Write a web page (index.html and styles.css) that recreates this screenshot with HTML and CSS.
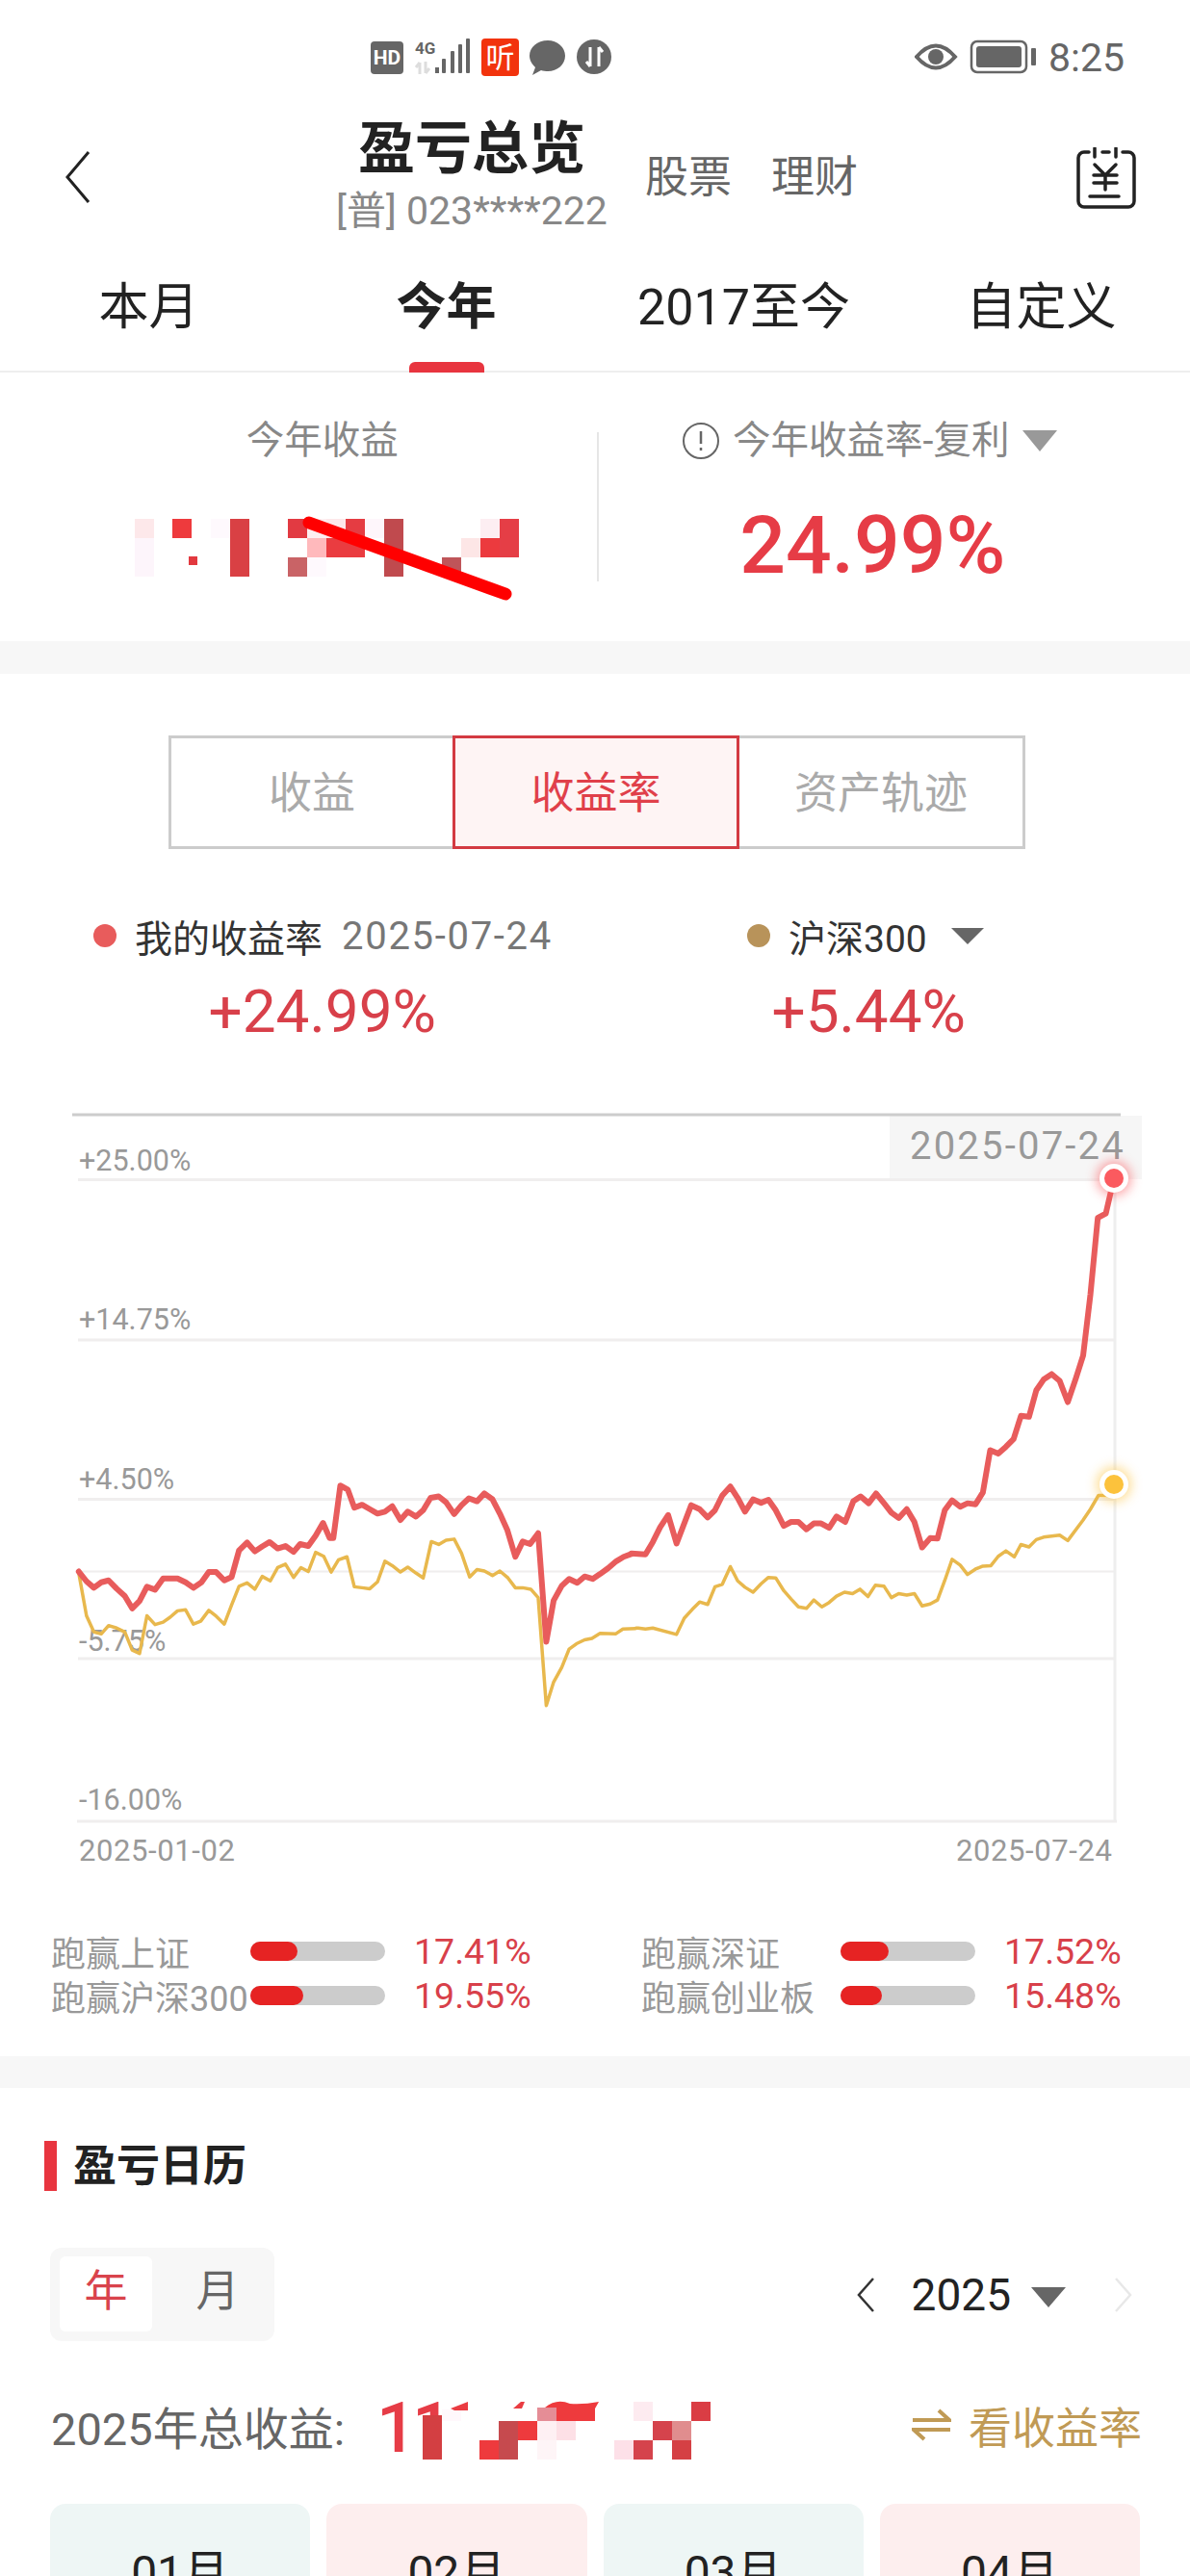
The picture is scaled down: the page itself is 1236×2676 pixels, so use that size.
FILE: index.html
```html
<!DOCTYPE html>
<html lang="zh-CN">
<head>
    <meta charset="UTF-8">
    <title>盈亏总览</title>
    <link rel="stylesheet" href="styles.css">
</head>
<body>
    <!-- 状态栏 -->
    <div class="status-bar">
        <svg class="status-icons" width="256" height="44" viewBox="385 48 256 44">
            <rect x="385" y="53" width="34" height="34" rx="4" fill="#666"/>
            <text x="402" y="77" class="st-hd" text-anchor="middle">HD</text>
            <text x="431" y="66" class="st-4g">4G</text>
            <path d="M436 87V75M436 75l-4 5M442 74v12M442 86l4-5" stroke="#ddd" stroke-width="3" fill="none"/>
            <rect x="452" y="80" width="4" height="6" fill="#666"/>
            <rect x="459" y="71" width="4" height="15" rx="1" fill="#666"/>
            <rect x="468" y="63" width="4" height="23" rx="1" fill="#666"/>
            <rect x="476" y="56" width="4" height="30" rx="1" fill="#666"/>
            <rect x="484" y="50" width="4" height="36" rx="1" fill="#666"/>
            <rect x="500" y="50" width="39" height="39" rx="4" fill="#f2330d"/>
            <text x="519.5" y="80" class="st-ting" text-anchor="middle">听</text>
            <path d="M569 52c-11 0-19 7-19 16 0 5 3 9 6 12l-3 8 9-5c2 .6 5 1 7 1 10 0 18-7 18-16s-8-16-18-16z" fill="#666"/>
            <circle cx="617" cy="69" r="18" fill="#666"/>
            <path d="M613 59v20M613 79l-4-5M622 79V59M622 59l4 5" stroke="#fff" stroke-width="3" fill="none"/>
        </svg>
        <svg class="status-right" width="128" height="44" viewBox="950 48 128 44">
            <path d="M952 69Q972 46 992 69Q972 92 952 69z" fill="none" stroke="#666" stroke-width="4"/>
            <circle cx="972" cy="69" r="8" fill="#666"/>
            <rect x="1009" y="53" width="57" height="32" rx="6" fill="none" stroke="#666" stroke-width="2.5"/>
            <rect x="1014" y="58" width="47" height="22" rx="3" fill="#666"/>
            <rect x="1071" y="60" width="5" height="18" rx="1" fill="#666"/>
        </svg>
        <span class="status-time">8:25</span>
    </div>

    <!-- 标题栏 -->
    <div class="header">
        <svg class="back-icon" width="28" height="56" viewBox="0 0 28 56">
            <path d="M24 2L2 28L24 54" fill="none" stroke="#222" stroke-width="3"/>
        </svg>
        <div class="title-box">
            <h1>盈亏总览</h1>
            <div class="account">[普] 023****222</div>
        </div>
        <div class="header-links">
            <span>股票</span>
            <span>理财</span>
        </div>
        <svg class="calendar-icon" width="62" height="64" viewBox="0 0 62 64">
            <g fill="none" stroke="#222" stroke-width="3.5" stroke-linecap="round">
                <path d="M13 5H8a6 6 0 0 0-6 6v45a6 6 0 0 0 6 6h46a6 6 0 0 0 6-6V11a6 6 0 0 0-6-6h-6"/>
                <path d="M19 1v9M41 1v9M27 5h7"/>
                <path d="M19 18l11 11l11-11M18 29h24M18 37h24M30 29v15M14 51h30"/>
            </g>
        </svg>
    </div>

    <!-- 时间切换 -->
    <div class="period-tabs">
        <div class="period-tab">本月</div>
        <div class="period-tab active">今年</div>
        <div class="period-tab">2017至今</div>
        <div class="period-tab">自定义</div>
    </div>

    <!-- 收益汇总 -->
    <div class="summary">
        <div class="summary-col">
            <div class="summary-label">今年收益</div>
            <svg class="mosaic-top" width="410" height="95" viewBox="130 530 410 95">
                <rect x="140" y="539" width="20" height="20" fill="#fde8ea"/>
                <rect x="140" y="559" width="20" height="40" fill="#fdf5fb"/>
                <rect x="179" y="539" width="20" height="20" fill="#ee3a3d"/>
                <rect x="219" y="539" width="20" height="20" fill="#fef9fd"/>
                <rect x="239" y="539" width="20" height="60" fill="#d94044"/>
                <rect x="196" y="578" width="9" height="9" fill="#e2393f"/>
                <rect x="299" y="539" width="20" height="20" fill="#e23a42"/>
                <rect x="299" y="579" width="20" height="20" fill="#c96366"/>
                <rect x="319" y="539" width="20" height="20" fill="#fdeef0"/>
                <rect x="319" y="559" width="20" height="20" fill="#ffb9bc"/>
                <rect x="319" y="579" width="20" height="20" fill="#fef9fd"/>
                <rect x="339" y="539" width="20" height="20" fill="#fde8ea"/>
                <rect x="339" y="559" width="40" height="20" fill="#ea3c40"/>
                <rect x="359" y="539" width="20" height="20" fill="#e53c42"/>
                <rect x="379" y="539" width="20" height="20" fill="#fef6fb"/>
                <rect x="399" y="539" width="20" height="60" fill="#c04a4e"/>
                <rect x="459" y="579" width="20" height="20" fill="#bf5559"/>
                <rect x="479" y="559" width="20" height="20" fill="#fde6e6"/>
                <rect x="499" y="539" width="20" height="20" fill="#fdeef2"/>
                <rect x="499" y="559" width="20" height="20" fill="#ec3a3e"/>
                <rect x="519" y="539" width="20" height="40" fill="#e53e46"/>
                <path d="M321 543L525 617" stroke="#f00" stroke-width="13" stroke-linecap="round"/>
            </svg>
        </div>
        <div class="summary-divider"></div>
        <div class="summary-col">
            <div class="summary-label rate-label">
                <svg width="38" height="38" viewBox="0 0 38 38">
                    <circle cx="19" cy="19" r="18" fill="none" stroke="#666" stroke-width="2"/>
                    <path d="M19 9v13M19 26v3" stroke="#666" stroke-width="2.5" fill="none"/>
                </svg>
                <span>今年收益率-复利</span>
                <i class="tri tri-light"></i>
            </div>
            <div class="summary-value">24.99%</div>
        </div>
    </div>

    <div class="band band-first"></div>

    <!-- 收益走势 -->
    <div class="trend">
        <div class="segment">
            <div class="segment-item seg-left">收益</div>
            <div class="segment-item seg-active">收益率</div>
            <div class="segment-item seg-right">资产轨迹</div>
        </div>

        <div class="legend">
            <div class="legend-item legend-mine">
                <i class="dot dot-red"></i>
                <span class="legend-name">我的收益率</span>
                <span class="legend-date">2025-07-24</span>
            </div>
            <div class="legend-item">
                <i class="dot dot-gold"></i>
                <span class="legend-name">沪深300</span>
                <i class="tri tri-dark"></i>
            </div>
        </div>
        <div class="legend-values">
            <div>+24.99%</div>
            <div>+5.44%</div>
        </div>

        <svg class="chart" width="1236" height="810" viewBox="0 1140 1236 810">
            <defs>
                <filter id="glow" x="-60%" y="-60%" width="220%" height="220%">
                    <feGaussianBlur stdDeviation="6"/>
                </filter>
            </defs>
            <rect x="924" y="1159" width="262" height="66" fill="#f6f6f6"/>
            <g fill="none">
                <path d="M75 1158H1164" stroke="#ccc" stroke-width="3"/>
                <path d="M81 1225.5H1158M81 1392H1158M81 1557.5H1158M81 1723H1158M80 1892H1160" stroke="#f0eeee" stroke-width="3"/>
                <path d="M81 1632.5H1158" stroke="#f0eeee" stroke-width="2"/>
                <path d="M1158 1225V1892" stroke="#eee" stroke-width="3"/>
            </g>
            <text x="82" y="1216" class="axis-text">+25.00%</text>
            <text x="82" y="1381" class="axis-text">+14.75%</text>
            <text x="82" y="1547" class="axis-text">+4.50%</text>
            <text x="82" y="1715" class="axis-text">-5.75%</text>
            <text x="82" y="1880" class="axis-text">-16.00%</text>
            <text x="82" y="1933" class="axis-text date-text">2025-01-02</text>
            <text x="993" y="1933" class="axis-text date-text">2025-07-24</text>
            <text x="945" y="1204" class="tip-text">2025-07-24</text>

            <!-- 沪深300 -->
            <g transform="translate(60 1130) scale(.38265 .5102)">
                <polyline class="line-gold" points="57,988 78,1075 98,1108 118,1112 138,1095 160,1100 182,1108 202,1145 222,1152 242,1075 264,1093 286,1088 305,1078 325,1065 347,1063 368,1092 388,1086 410,1064 430,1076 452,1092 472,1053 492,1015 514,1008 535,1021 555,995 577,1004 597,977 618,970 640,997 660,977 680,985 700,946 722,954 742,986 762,961 785,955 805,1016 826,1018 847,1020 868,1006 888,964 908,973 930,986 950,976 972,988 992,998 1014,924 1034,930 1054,921 1076,919 1096,948 1118,996 1138,981 1158,984 1180,993 1200,984 1222,998 1242,1018 1262,1018 1284,1021 1304,1038 1326,1258 1346,1210 1368,1180 1388,1143 1408,1132 1430,1124 1450,1121 1472,1111 1514,1112 1534,1102 1568,1101"/>
            </g>
            <g transform="translate(640 1130) scale(.3801 .5102)">
                <polyline class="line-gold" points="54,1100 60,1100 80,1102 100,1100 165,1113 186,1080 208,1062 228,1047 250,1052 270,1016 290,1011 312,975 332,1004 352,1017 374,1027 396,1010 416,997 436,998 458,1024 478,1041 498,1057 520,1060 540,1043 562,1057 582,1048 602,1035 624,1027 646,1030 666,1021 688,1036 708,1013 732,1015 752,1038 772,1030 794,1033 815,1030 836,1055 858,1051 878,1043 898,1003 918,960 940,972 960,991 982,980 1002,974 1024,973 1044,954 1065,943 1088,955 1106,930 1128,935 1148,920 1168,915 1212,911 1234,922 1276,880 1296,858 1318,830 1360,830"/>
            </g>
            <!-- 我的收益率 -->
            <g transform="translate(60 1130) scale(.38265 .5102)">
                <polyline class="line-red" points="57,985 78,1005 98,1018 118,1007 138,1003 160,1020 182,1035 202,1060 222,1045 242,1016 264,1022 286,999 325,999 347,1007 368,1018 390,1007 410,986 430,986 452,1003 472,996 492,942 514,926 535,944 555,934 575,925 597,938 618,933 640,945 658,929 680,933 700,912 720,886 738,917 748,917 767,810 787,818 805,855 826,849 847,858 868,867 888,863 908,852 930,880 950,863 972,873 992,860 1012,835 1034,832 1054,844 1076,868 1096,850 1116,836 1138,842 1158,826 1180,838 1200,867 1220,900 1242,955 1262,924 1282,929 1304,907 1326,1128 1346,1044 1368,1014 1388,1000 1410,1008 1430,995 1452,1000 1472,990 1494,978 1516,964 1536,955 1558,949"/>
            </g>
            <g transform="translate(640 1130) scale(.3801 .5102)">
                <polyline class="line-red" points="42,948 80,950 100,925 120,895 142,870 165,928 205,850 228,858 250,875 270,860 290,830 312,812 332,835 352,863 374,838 396,845 416,839 436,860 458,892 478,884 498,884 520,899 540,887 560,887 582,896 602,873 626,884 648,842 668,832 690,846 710,826 732,846 752,865 772,876 794,858 815,884 836,936 858,917 878,918 898,860 918,840 940,853 960,846 982,848 1002,824 1022,738 1044,745 1065,731 1086,715 1106,668 1128,670 1148,616 1168,594 1190,583 1212,597 1234,640 1256,592 1276,545 1296,420 1316,265 1338,256 1360,185"/>
            </g>

            <circle cx="1157" cy="1224" r="18" fill="#fb5a5f" opacity=".55" filter="url(#glow)"/>
            <circle cx="1157" cy="1224" r="15" fill="#fff"/>
            <circle cx="1157" cy="1224" r="10" fill="#fb5a5f"/>
            <circle cx="1157" cy="1542" r="18" fill="#fcc23c" opacity=".55" filter="url(#glow)"/>
            <circle cx="1157" cy="1542" r="15" fill="#fff"/>
            <circle cx="1157" cy="1542" r="10" fill="#fcc23c"/>
        </svg>

        <div class="stats">
            <div class="stat">
                <span class="stat-name">跑赢上证</span>
                <div class="stat-bar"><div class="stat-fill" style="width:49px"></div></div>
                <span class="stat-pct">17.41%</span>
            </div>
            <div class="stat">
                <span class="stat-name">跑赢深证</span>
                <div class="stat-bar"><div class="stat-fill" style="width:50px"></div></div>
                <span class="stat-pct">17.52%</span>
            </div>
            <div class="stat">
                <span class="stat-name">跑赢沪深300</span>
                <div class="stat-bar"><div class="stat-fill" style="width:55px"></div></div>
                <span class="stat-pct">19.55%</span>
            </div>
            <div class="stat">
                <span class="stat-name">跑赢创业板</span>
                <div class="stat-bar"><div class="stat-fill" style="width:43px"></div></div>
                <span class="stat-pct">15.48%</span>
            </div>
        </div>
    </div>

    <div class="band band-second"></div>

    <!-- 盈亏日历 -->
    <div class="calendar">
        <div class="cal-title"><i></i><h2>盈亏日历</h2></div>

        <div class="cal-controls">
            <div class="cal-toggle">
                <div class="toggle-item toggle-on">年</div>
                <div class="toggle-item">月</div>
            </div>
            <div class="year-picker">
                <svg width="18" height="36" viewBox="0 0 18 36"><path d="M17 1L2 18L17 35" fill="none" stroke="#333" stroke-width="2.5"/></svg>
                <span class="year">2025</span>
                <i class="tri tri-year"></i>
                <svg class="year-next" width="19" height="36" viewBox="0 0 19 36"><path d="M2 1L17 18L2 35" fill="none" stroke="#e8e8e8" stroke-width="2.5"/></svg>
            </div>
        </div>

        <div class="cal-total">
            <span class="total-label">2025年总收益:</span>
            <svg class="mosaic-total" width="380" height="80" viewBox="380 2480 380 80">
                <text x="391" y="2548" class="mosaic-num">1</text>
                <text x="428" y="2548" class="mosaic-num">1</text>
                <rect x="439" y="2510" width="20" height="46" fill="#d33f42"/>
                <rect x="459" y="2504" width="20" height="12" fill="#fff8fc"/>
                <path d="M468 2503L486 2496V2505H472z" fill="#ea3c42"/>
                <path d="M533 2503L541 2496H545L542 2503z" fill="#ea3c42"/>
                <rect x="498" y="2536" width="20" height="20" fill="#ee3a3d"/>
                <rect x="518" y="2516" width="20" height="40" fill="#c64a4e"/>
                <rect x="538" y="2516" width="20" height="20" fill="#ee3a3d"/>
                <rect x="558" y="2502" width="20" height="14" fill="#e58d96"/>
                <rect x="558" y="2516" width="20" height="20" fill="#fef0f3"/>
                <rect x="558" y="2536" width="20" height="20" fill="#fef5f7"/>
                <path d="M566 2502Q578 2492 592 2498Q606 2499 622 2496L618 2503V2516H578V2502z" fill="#ee3a3d"/>
                <rect x="578" y="2516" width="20" height="20" fill="#fde0e6"/>
                <rect x="638" y="2536" width="20" height="20" fill="#fde0e8"/>
                <rect x="658" y="2496" width="20" height="20" fill="#fdebf0"/>
                <rect x="658" y="2536" width="20" height="20" fill="#d5434c"/>
                <rect x="678" y="2516" width="20" height="20" fill="#d5434c"/>
                <rect x="698" y="2516" width="20" height="20" fill="#e08d8e"/>
                <rect x="698" y="2536" width="20" height="20" fill="#d54044"/>
                <rect x="718" y="2496" width="20" height="20" fill="#da3d44"/>
            </svg>
            <div class="total-switch">
                <svg width="41" height="36" viewBox="0 0 41 36">
                    <path d="M1 13H39L28 3M40 23H2L13 33" fill="none" stroke="#c09a55" stroke-width="4"/>
                </svg>
                <span>看收益率</span>
            </div>
        </div>

        <div class="month-grid">
            <div class="month-card month-green">01月</div>
            <div class="month-card month-pink">02月</div>
            <div class="month-card month-green">03月</div>
            <div class="month-card month-pink">04月</div>
        </div>
    </div>
</body>
</html>
```

FILE: styles.css
```css
/* 基础 */
html, body {
    margin: 0;
    height: 2676px;
    overflow: hidden;
    background: #fff;
}

body {
    font-family: Roboto, "Noto Sans CJK SC", sans-serif;
    color: #222;
}

svg {
    display: block;
    flex-shrink: 0;
}

i {
    display: block;
}

/* 状态栏 */
.status-bar {
    display: flex;
    align-items: center;
    height: 100px;
    padding: 20px 0 0 385px;
    box-sizing: border-box;
}

.status-right {
    margin-left: 309px;
}

.status-time {
    margin-left: 11px;
    font-size: 41px;
    color: #666;
}

.st-hd {
    font: 700 21px Roboto, sans-serif;
    fill: #fff;
}

.st-4g {
    font: 700 17px Roboto, sans-serif;
    fill: #666;
}

.st-ting {
    font: 400 30px "Noto Sans CJK SC", sans-serif;
    fill: #fff;
}

/* 标题栏 */
.header {
    display: flex;
    align-items: flex-start;
    height: 170px;
    padding: 20px 56px 0 68px;
    box-sizing: border-box;
}

.back-icon {
    margin-top: 36px;
}

.title-box {
    width: 280px;
    margin-left: 254px;
    text-align: center;
}

.title-box h1 {
    margin: 0 -10px;
    font-size: 59px;
    line-height: 70px;
    font-weight: 700;
    color: #222;
}

.account {
    margin: 6px -10px 0;
    font-size: 41px;
    line-height: 46px;
    color: #888;
    white-space: nowrap;
}

.header-links {
    display: flex;
    gap: 41px;
    margin: 40px 0 0 40px;
    font-size: 45px;
    line-height: 50px;
    color: #666;
}

.calendar-icon {
    margin: 33px 0 0 auto;
}

/* 时间切换 */
.period-tabs {
    display: grid;
    grid-template-columns: repeat(4, 1fr);
    height: 117px;
    border-bottom: 2px solid #eee;
    box-sizing: border-box;
}

.period-tab {
    position: relative;
    padding-top: 18px;
    font-size: 52px;
    line-height: 64px;
    text-align: center;
    color: #222;
}

.period-tab.active {
    font-weight: 700;
}

.period-tab.active::after {
    content: "";
    position: absolute;
    left: 50%;
    bottom: -2px;
    width: 78px;
    height: 11px;
    margin-left: -39px;
    border-radius: 6px 6px 0 0;
    background: #e8353f;
}

/* 收益汇总 */
.summary {
    display: flex;
    height: 279px;
    padding: 44px 45px 0 50px;
    box-sizing: border-box;
}

.summary-col {
    flex: 1;
    display: flex;
    flex-direction: column;
    align-items: center;
}

.summary-divider {
    width: 2px;
    height: 155px;
    margin-top: 18px;
    background: #e6e6e6;
}

.summary-label {
    font-size: 39.5px;
    line-height: 53px;
    color: #888;
}

.rate-label {
    display: flex;
    align-items: center;
    gap: 14px;
    margin-left: -5px;
}

.mosaic-top {
    margin-top: 46px;
}

.summary-value {
    margin-top: 33px;
    font-size: 84px;
    line-height: 100px;
    font-weight: 500;
    color: #e63c46;
}

.tri {
    width: 0;
    height: 0;
    border-style: solid;
    border-color: transparent;
    border-bottom-width: 0;
}

.tri-light {
    border-width: 22px 18px 0;
    border-top-color: #999;
}

.tri-dark {
    margin-left: 25px;
    border-width: 17px 17px 0;
    border-top-color: #666;
}

.tri-year {
    margin: 6px 0 0 21px;
    border-width: 21px 18px 0;
    border-top-color: #666;
}

.band {
    background: #f7f7f7;
}

.band-first {
    height: 34px;
}

.band-second {
    height: 33px;
}

/* 收益走势 */
.trend {
    height: 1436px;
    padding-top: 64px;
    box-sizing: border-box;
}

.segment {
    display: flex;
    width: 890px;
    height: 118px;
    margin-left: 175px;
}

.segment-item {
    display: flex;
    align-items: center;
    justify-content: center;
    box-sizing: border-box;
    padding-bottom: 6px;
    font-size: 45px;
    color: #aaa;
    border: 3px solid #ccc;
}

.seg-left {
    width: 295px;
    border-right: 0;
}

.seg-active {
    width: 298px;
    border-color: #d33a42;
    background: #fef4f4;
    color: #e0404a;
}

.seg-right {
    width: 297px;
    border-left: 0;
}

.legend {
    display: flex;
    margin-top: 69px;
    padding-left: 97px;
    height: 42px;
}

.legend-item {
    display: flex;
    align-items: center;
}

.legend-mine {
    width: 679px;
}

.dot {
    width: 24px;
    height: 24px;
    border-radius: 50%;
}

.dot-red {
    background: #e85c5c;
}

.dot-gold {
    background: #b8935a;
}

.legend-name {
    margin-left: 19px;
    font-size: 39px;
    color: #333;
}

.legend-date {
    margin-left: 20px;
    font-size: 40px;
    letter-spacing: 1.7px;
    color: #777;
}

.legend-values {
    display: flex;
    margin-top: 22px;
    padding: 0 50px 0 51px;
    font-size: 62px;
    line-height: 72px;
    color: #d8404a;
}

.legend-values div {
    flex: 1;
    text-align: center;
}

.chart {
    margin-top: 53px;
}

.axis-text {
    font: 400 30.5px Roboto, sans-serif;
    fill: #999;
}

.date-text {
    font-size: 31px;
    letter-spacing: .6px;
}

.tip-text {
    font: 400 40px Roboto, sans-serif;
    letter-spacing: 2.2px;
    fill: #999;
}

.line-red,
.line-gold {
    fill: none;
    stroke-linejoin: round;
    stroke-linecap: round;
    vector-effect: non-scaling-stroke;
}

.line-red {
    stroke: #e85c5c;
    stroke-width: 6px;
}

.line-gold {
    stroke: #e8b84d;
    stroke-width: 3.5px;
}

/* 跑赢指数 */
.stats {
    display: grid;
    grid-template-columns: 613px 1fr;
    grid-auto-rows: 46px;
    margin-top: 54px;
    padding-left: 53px;
}

.stat {
    display: flex;
    align-items: center;
}

.stat-name {
    width: 207px;
    font-size: 36px;
    color: #999;
    white-space: nowrap;
}

.stat-bar {
    width: 140px;
    height: 20px;
    border-radius: 10px;
    background: #ccc;
}

.stat-fill {
    height: 100%;
    border-radius: 10px;
    background: #e62323;
}

.stat-pct {
    margin-left: 30px;
    font-size: 37.5px;
    color: #d8404a;
}

/* 盈亏日历 */
.calendar {
    padding-top: 55px;
}

.cal-title {
    display: flex;
    align-items: center;
    gap: 17px;
    height: 52px;
    margin-left: 46px;
}

.cal-title i {
    width: 13px;
    height: 52px;
    background: #e8353f;
}

.cal-title h2 {
    margin: -8px 0 0;
    font-size: 45px;
    font-weight: 700;
    color: #222;
}

.cal-controls {
    display: flex;
    align-items: center;
    justify-content: space-between;
    margin: 59px 60px 0 52px;
}

.cal-toggle {
    display: flex;
    width: 233px;
    height: 97px;
    padding: 9px 10px 10px;
    box-sizing: border-box;
    border-radius: 12px;
    background: #f7f7f7;
}

.toggle-item {
    flex: none;
    width: 96px;
    border-radius: 6px;
    font-size: 45px;
    line-height: 74px;
    text-align: center;
    color: #666;
}

.toggle-on {
    margin-right: 20px;
    background: #fff;
    color: #d9434c;
}

.year-picker {
    display: flex;
    align-items: center;
}

.year {
    margin-left: 39px;
    font-size: 46px;
    line-height: 56px;
    color: #222;
}

.year-next {
    margin-left: 50px;
}

.cal-total {
    display: flex;
    align-items: center;
    height: 80px;
    margin: 47px 50px 0 53px;
}

.total-label {
    width: 327px;
    font-size: 47px;
    color: #666;
    white-space: nowrap;
}

.mosaic-num {
    font: 500 73px Roboto, sans-serif;
    fill: #e63c46;
}

.total-switch {
    display: flex;
    align-items: center;
    gap: 18px;
    margin-left: auto;
    font-size: 45px;
    color: #c09a55;
}

.month-grid {
    display: grid;
    grid-template-columns: repeat(4, 1fr);
    gap: 17px;
    margin: 42px 52px 0;
}

.month-card {
    height: 160px;
    padding-top: 44px;
    box-sizing: border-box;
    border-radius: 16px;
    font-size: 48px;
    line-height: 56px;
    text-align: center;
    color: #222;
}

.month-green {
    background: #eef6f5;
}

.month-pink {
    background: #fdeeee;
}
```
